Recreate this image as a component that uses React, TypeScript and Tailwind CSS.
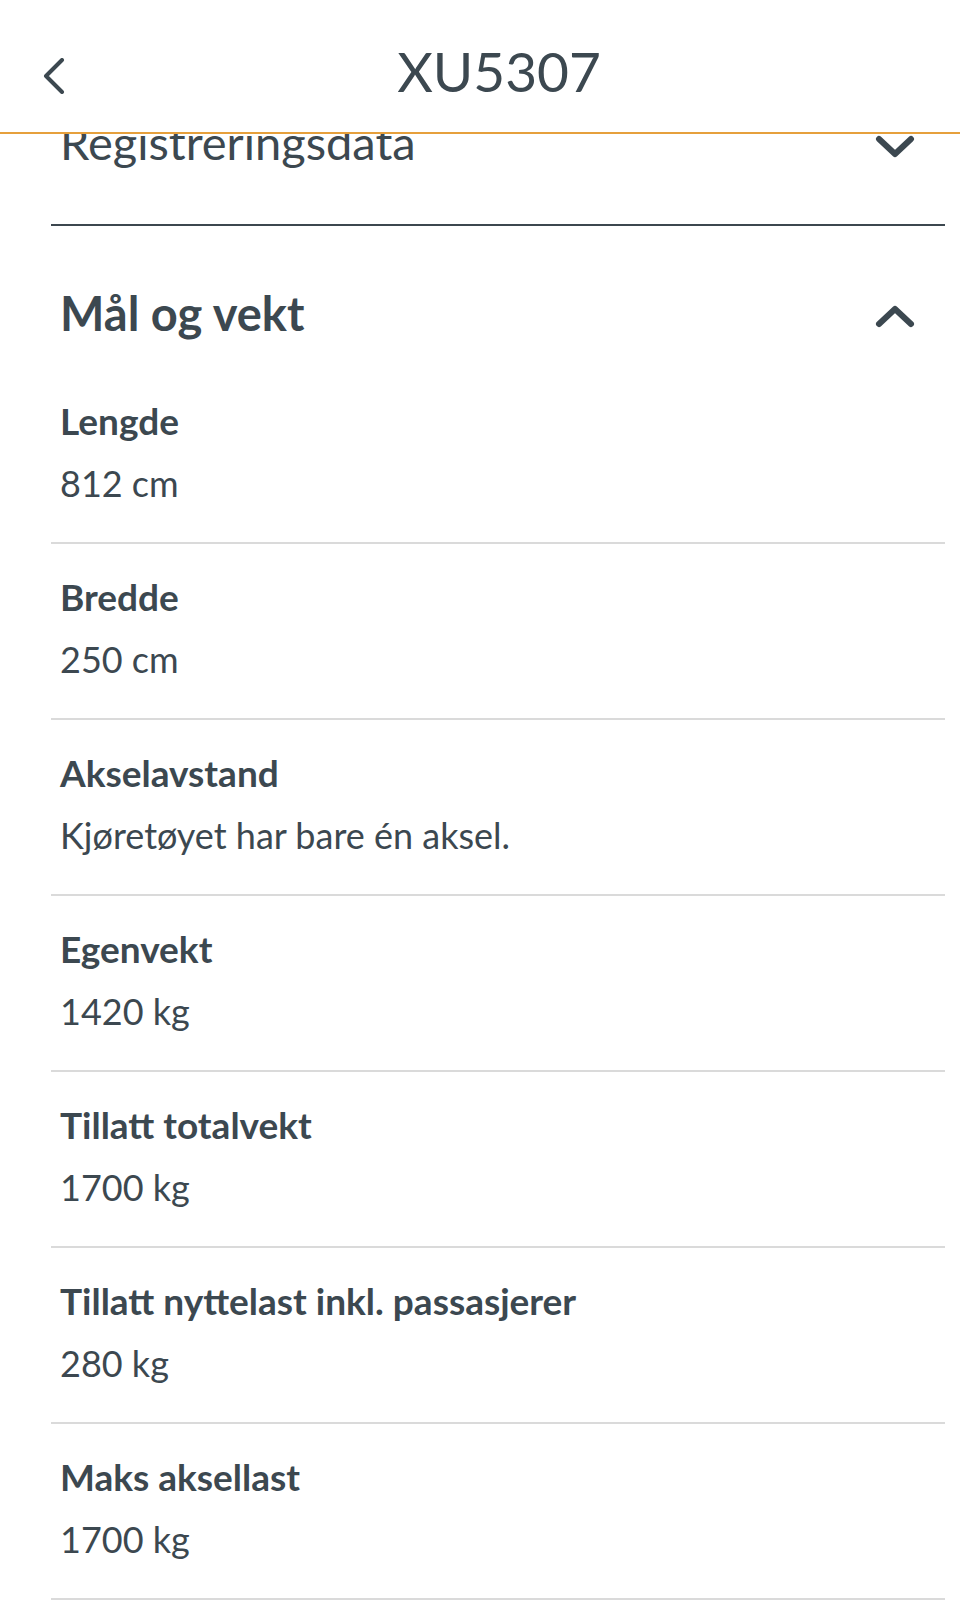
const rows = [
  { label: "Lengde", value: "812 cm" },
  { label: "Bredde", value: "250 cm" },
  { label: "Akselavstand", value: "Kjøretøyet har bare én aksel." },
  { label: "Egenvekt", value: "1420 kg" },
  { label: "Tillatt totalvekt", value: "1700 kg" },
  { label: "Tillatt nyttelast inkl. passasjerer", value: "280 kg" },
  { label: "Maks aksellast", value: "1700 kg" },
];

function Chevron({ up }: { up?: boolean }) {
  return (
    <svg width="40" height="24" viewBox="0 0 40 24" fill="none" aria-hidden="true">
      <path
        d={up ? "M4 20L20 5l16 15" : "M4 4l16 15L36 4"}
        stroke="currentColor"
        strokeWidth={6}
        strokeLinecap="round"
        strokeLinejoin="round"
      />
    </svg>
  );
}

export default function App() {
  return (
    <div className="relative min-h-[1604px] bg-white text-[#3c4850] font-['Lato',sans-serif] overflow-hidden">
      {/* Header - sits over the scrolled content */}
      <header className="absolute top-0 left-0 right-0 z-10 h-[134px] bg-white border-b-2 border-[#e6a03c] flex items-start">
        <div className="w-[100px] pl-[43px] pt-[58px]">
          <svg width="22" height="36" viewBox="0 0 22 36" fill="none" aria-hidden="true">
            <path d="M19 2L3 18l16 16" stroke="currentColor" strokeWidth={4} strokeLinecap="round" strokeLinejoin="round" />
          </svg>
        </div>
        <h1 className="flex-1 text-center text-[55px] leading-[70px] pt-[36px] font-normal">XU5307</h1>
        <div className="w-[62px]" />
      </header>

      <main className="pl-[51px] pr-[15px]">
        {/* Collapsed section, partly under header */}
        <div className="pt-[117px] pb-[57px] border-b-2 border-[#3c474f] flex items-start justify-between pl-[9px] pr-[30px]">
          <h2 className="text-[47px] leading-[50px] font-normal">Registreringsdata</h2>
          <div className="pt-[18px]">
            <Chevron />
          </div>
        </div>

        {/* Expanded section */}
        <div className="pt-[61px] pb-[29px] flex items-start justify-between pl-[9px] pr-[30px]">
          <h2 className="text-[47px] leading-[52px] font-bold">Mål og vekt</h2>
          <div className="pt-[17px]">
            <Chevron up />
          </div>
        </div>

        <div className="flex flex-col">
          {rows.map((r) => (
            <div key={r.label} className="pt-[31px] pb-[37px] pl-[9px] border-b-2 border-[#dadada]">
              <div className="text-[37px] leading-[44px] font-bold">{r.label}</div>
              <div className="mt-[18px] text-[36px] leading-[44px] font-normal">{r.value}</div>
            </div>
          ))}
        </div>
      </main>
    </div>
  );
}
